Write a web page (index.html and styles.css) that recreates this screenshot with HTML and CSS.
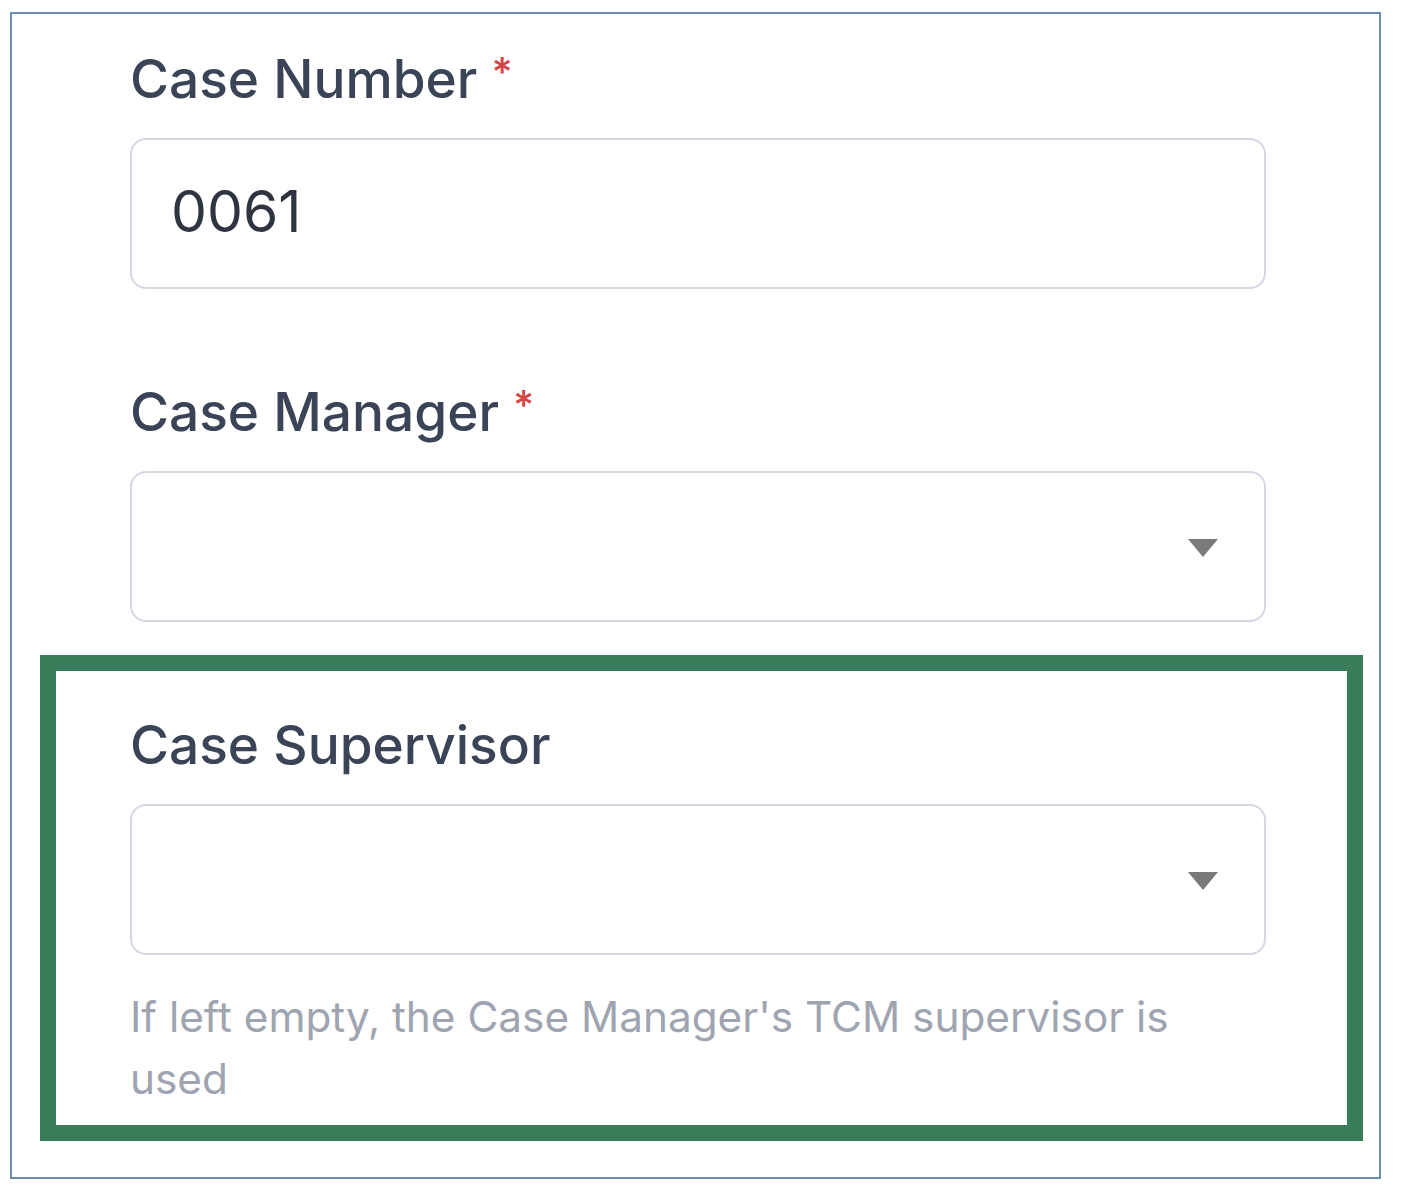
FILE: index.html
```html
<!DOCTYPE html>
<html lang="en">
<head>
<meta charset="utf-8">
<title>Case form</title>
<link rel="stylesheet" href="styles.css">
</head>
<body>
<div class="panel">
  <div class="field field-first">
    <label class="label">Case Number <span class="req">*</span></label>
    <div class="input"><span class="value">0061</span></div>
  </div>
  <div class="field field-second">
    <label class="label">Case Manager <span class="req">*</span></label>
    <div class="input select"><span class="caret"></span></div>
  </div>
  <div class="highlight">
    <div class="field">
      <label class="label">Case Supervisor</label>
      <div class="input select"><span class="caret"></span></div>
      <p class="hint">If left empty, the Case Manager's TCM supervisor is used</p>
    </div>
  </div>
</div>
</body>
</html>
```
FILE: styles.css
```css
* { box-sizing: border-box; }
html, body { margin: 0; padding: 0; background: #ffffff; }
body {
  font-family: Inter, "Noto Sans", sans-serif;
  padding: 12px 0 0 10px;
}
.panel {
  width: 1371px;
  height: 1167px;
  border: 2px solid #6d8db0;
  padding: 0 16px 0 28px;
}
.field {
  padding-left: 90px;
  padding-right: 97px;
}
.field-first { padding-top: 32px; }
.field-second { padding-top: 90px; }
.label {
  display: block;
  font-size: 53.2px;
  line-height: 66px;
  font-weight: 500;
  color: #3a4456;
  margin-bottom: 26px;
}
.req {
  color: #d64545;
  font-size: 40px;
  line-height: 0;
  vertical-align: 12px;
}
.input {
  height: 151px;
  border: 2px solid #d3d8e3;
  border-radius: 16px;
  display: flex;
  align-items: center;
  padding: 0 46px 0 39px;
  background: #fff;
}
.value {
  font-size: 57px;
  line-height: 1;
  color: #2e3440;
  margin-bottom: 4px;
}
.select { justify-content: flex-end; }
.caret {
  width: 0;
  height: 0;
  border-left: 15px solid transparent;
  border-right: 15px solid transparent;
  border-top: 18px solid #7a7a7a;
  margin-top: 2px;
}
.highlight {
  margin-top: 33px;
  border: 16px solid #3a7d5a;
  width: 1323px;
  height: 486px;
}
.highlight .field {
  padding-left: 74px;
  padding-right: 81px;
  padding-top: 41px;
}
.hint {
  margin: 31px 0 0 0;
  font-size: 42.3px;
  line-height: 62px;
  color: #9ea4b0;
  padding-right: 60px;
}
```
